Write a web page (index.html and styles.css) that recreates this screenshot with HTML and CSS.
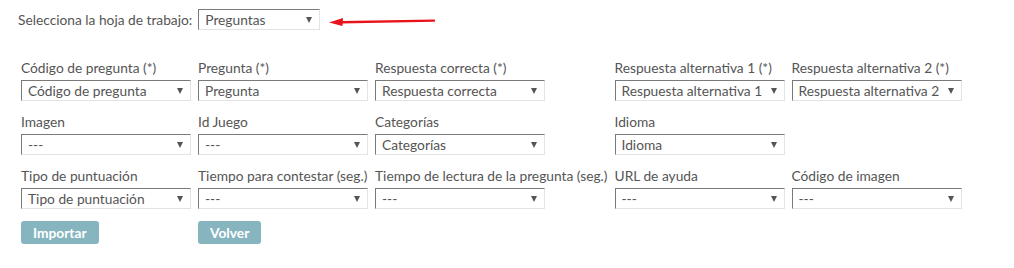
FILE: index.html
```html
<!DOCTYPE html>
<html lang="es">
<head>
<meta charset="utf-8">
<title>Importar preguntas</title>
<link rel="stylesheet" href="styles.css">
</head>
<body>
<div class="page">
  <div class="sheet-row">
    <span class="sheet-label">Selecciona la hoja de trabajo:</span>
    <div class="select sheet-select"><span>Preguntas</span><i class="caret"></i></div>
    <svg class="annot" width="110" height="10" viewBox="0 0 110 10">
      <path d="M13 6.2 L106 4.6" stroke="#e8141a" stroke-width="2.4" stroke-linecap="round" fill="none"/>
      <path d="M1 6.4 L15 2 L14.5 10 Z" fill="#e8141a"/>
    </svg>
  </div>

  <div class="grid">
    <div class="field"><label>Código de pregunta (*)</label><div class="select"><span>Código de pregunta</span><i class="caret"></i></div></div>
    <div class="field"><label>Pregunta (*)</label><div class="select"><span>Pregunta</span><i class="caret"></i></div></div>
    <div class="field"><label>Respuesta correcta (*)</label><div class="select"><span>Respuesta correcta</span><i class="caret"></i></div></div>
    <div class="field"><label>Respuesta alternativa 1 (*)</label><div class="select"><span>Respuesta alternativa 1</span><i class="caret"></i></div></div>
    <div class="field"><label>Respuesta alternativa 2 (*)</label><div class="select"><span>Respuesta alternativa 2</span><i class="caret"></i></div></div>

    <div class="field"><label>Imagen</label><div class="select"><span>---</span><i class="caret"></i></div></div>
    <div class="field"><label>Id Juego</label><div class="select"><span>---</span><i class="caret"></i></div></div>
    <div class="field"><label>Categorías</label><div class="select"><span>Categorías</span><i class="caret"></i></div></div>
    <div class="field"><label>Idioma</label><div class="select"><span>Idioma</span><i class="caret"></i></div></div>
    <div class="field"></div>

    <div class="field"><label>Tipo de puntuación</label><div class="select"><span>Tipo de puntuación</span><i class="caret"></i></div></div>
    <div class="field"><label>Tiempo para contestar (seg.)</label><div class="select"><span>---</span><i class="caret"></i></div></div>
    <div class="field"><label>Tiempo de lectura de la pregunta (seg.)</label><div class="select"><span>---</span><i class="caret"></i></div></div>
    <div class="field"><label>URL de ayuda</label><div class="select"><span>---</span><i class="caret"></i></div></div>
    <div class="field"><label>Código de imagen</label><div class="select"><span>---</span><i class="caret"></i></div></div>

    <div class="actions"><button class="btn" type="button">Importar</button></div>
    <div class="actions"><button class="btn" type="button">Volver</button></div>
  </div>
</div>
</body>
</html>
```

FILE: styles.css
```css
* { box-sizing: border-box; }
html, body { margin: 0; padding: 0; background: #fff; }
body {
  font-family: Lato, "Open Sans", "Liberation Sans", sans-serif;
  font-size: 13.75px;
  color: #555;
}
.page { padding: 9px 0 0 18px; }

.sheet-row {
  display: flex;
  align-items: center;
  height: 21px;
}
.sheet-label { margin-right: 6px; }

.select {
  display: flex;
  align-items: center;
  justify-content: space-between;
  height: 21px;
  width: 170px;
  padding: 0 7px 0 6px;
  border-top: 1px solid #7a7a7a;
  border-left: 1px solid #7a7a7a;
  border-right: 1px solid #e3e3e3;
  border-bottom: 1px solid #e3e3e3;
  background: #fff;
  color: #555;
  white-space: nowrap;
  overflow: hidden;
}
.sheet-row .sheet-select { width: 122px; }
.select span { line-height: 19px; }
.caret {
  flex: none;
  width: 0;
  height: 0;
  border-left: 3.5px solid transparent;
  border-right: 3.5px solid transparent;
  border-top: 6px solid #555;
  margin-left: 4px;
}
.annot { margin-left: 8px; margin-top: 3px; }

.grid {
  display: grid;
  grid-template-columns: repeat(5, auto);
  justify-content: start;
  column-gap: 7px;
  row-gap: 12px;
  margin-top: 29px;
  margin-left: 3px;
}
.field { display: flex; flex-direction: column; }
.field label {
  line-height: 18px;
  margin-bottom: 3px;
  white-space: nowrap;
}

.btn {
  font-family: Lato, "Open Sans", "Liberation Sans", sans-serif;
  font-size: 13.75px;
  font-weight: 700;
  color: #fff;
  background: #87b5bf;
  border: 0;
  border-radius: 3px;
  height: 23px;
  padding: 0 12px;
  cursor: pointer;
}
```
